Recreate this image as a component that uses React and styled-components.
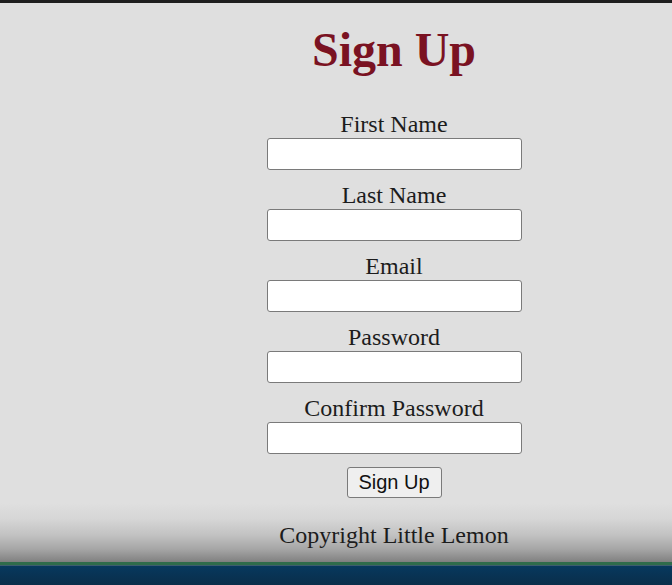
import React from 'react';
import styled, { createGlobalStyle } from 'styled-components';

const GlobalStyle = createGlobalStyle`
	html,
	body {
		margin: 0;
		padding: 0;
		background: #dfdfdf;
	}
`;

const Page = styled.div`
	display: flex;
	flex-direction: column;
	width: 672px;
	height: 585px;
	overflow: hidden;
	background: #dfdfdf;
	font-family: 'Liberation Serif', 'Times New Roman', serif;
	color: #1c1c1c;
`;

const TopBar = styled.div`
	height: 3px;
	background: #1e1e1e;
	flex-shrink: 0;
`;

const Main = styled.main`
	flex: 1;
	display: flex;
	flex-direction: column;
	align-items: center;
	padding-left: 116px;
	background: linear-gradient(
		to bottom,
		#dfdfdf 0px,
		#dfdfdf 500px,
		#d6d6d6 516px,
		#c2c2c2 532px,
		#a6a6a6 546px,
		#868686 557px,
		#7e7e7e 559px
	);
`;

const Title = styled.h1`
	margin: 20px 0 0;
	font-size: 48px;
	font-weight: bold;
	line-height: 54px;
	color: #7a1222;
`;

const Form = styled.form`
	display: flex;
	flex-direction: column;
	align-items: center;
	margin-top: 33px;
`;

const Field = styled.div`
	display: flex;
	flex-direction: column;
	align-items: center;
	margin-bottom: 11px;
`;

const Label = styled.label`
	font-size: 24px;
	line-height: 28px;
`;

const Input = styled.input`
	box-sizing: border-box;
	width: 255px;
	height: 32px;
	border: 1px solid #7a7a7a;
	border-radius: 3px;
	background: #ffffff;
	font-size: 16px;
	padding: 0 6px;
`;

const Button = styled.button`
	box-sizing: border-box;
	margin-top: 2px;
	width: 95px;
	height: 31px;
	border: 1px solid #7a7a7a;
	border-radius: 3px;
	background: #efefef;
	font-family: 'Liberation Sans', Arial, sans-serif;
	font-size: 20px;
	color: #111;
	padding: 0;
`;

const Copyright = styled.p`
	margin: 23px 0 0;
	font-size: 24px;
	line-height: 28px;
`;

const BottomBar = styled.div`
	flex-shrink: 0;
	height: 23px;
	border-top: 3px solid #2f6b4b;
	box-shadow: inset 0 1px 0 #3d5c6e;
	background: linear-gradient(to bottom, #07395f, #0a2e4a);
	box-sizing: border-box;
`;

const fields = [
	{ id: 'firstName', label: 'First Name', type: 'text' },
	{ id: 'lastName', label: 'Last Name', type: 'text' },
	{ id: 'email', label: 'Email', type: 'email' },
	{ id: 'password', label: 'Password', type: 'password' },
	{ id: 'confirmPassword', label: 'Confirm Password', type: 'password' },
];

export default function App() {
	return (
		<>
			<GlobalStyle />
			<Page>
				<TopBar />
				<Main>
					<Title>Sign Up</Title>
					<Form onSubmit={(e) => e.preventDefault()}>
						{fields.map((f) => (
							<Field key={f.id}>
								<Label htmlFor={f.id}>{f.label}</Label>
								<Input id={f.id} name={f.id} type={f.type} />
							</Field>
						))}
						<Button type="submit">Sign Up</Button>
					</Form>
					<Copyright>Copyright Little Lemon</Copyright>
				</Main>
				<BottomBar />
			</Page>
		</>
	);
}
